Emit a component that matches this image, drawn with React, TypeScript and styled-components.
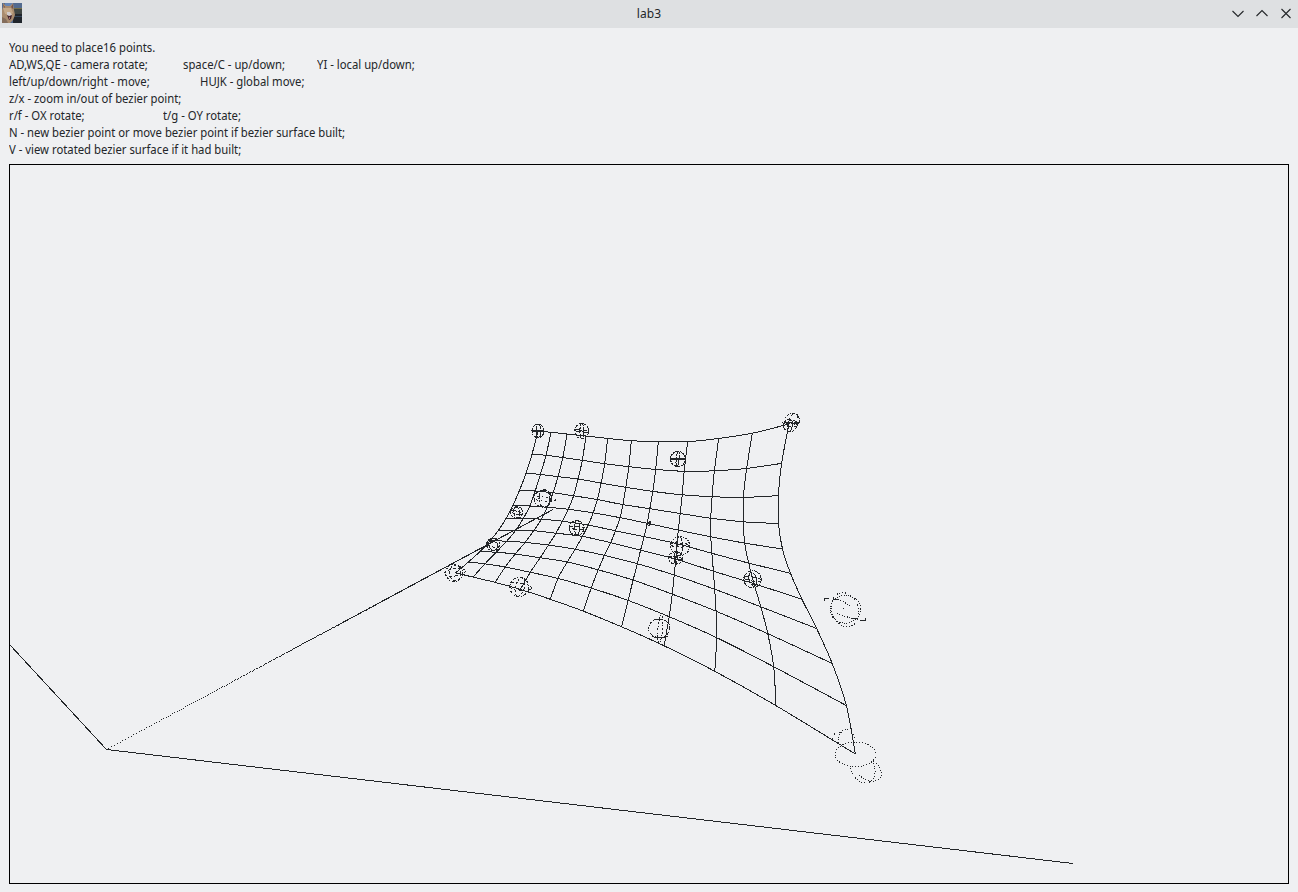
import React from "react";
import styled, { createGlobalStyle } from "styled-components";

const ink = "#232629";

const GlobalStyle = createGlobalStyle`
  html, body { margin: 0; padding: 0; background: #eff0f2; }
  body { font-family: "Noto Sans", sans-serif; color: ${ink}; overflow: hidden; }
`;

const Window = styled.div`
  display: flex;
  flex-direction: column;
  box-sizing: border-box;
  width: 1298px;
  height: 892px;
  background: #eff0f2;
`;

const TitleBar = styled.header`
  display: grid;
  grid-template-columns: 100px 1fr 100px;
  align-items: center;
  flex: none;
  height: 28px;
  background: #dee0e2;
`;

const AppIcon = styled.svg`
  display: block;
  width: 20px;
  height: 20px;
  margin: -2px 0 0 2px;
`;

const Title = styled.h1`
  margin: -1px 0 0;
  font-size: 12px;
  line-height: 17px;
  font-weight: 400;
  letter-spacing: 0.15px;
  text-align: center;
`;

const WindowButtons = styled.div`
  display: flex;
  justify-content: flex-end;
  gap: 8px;
  padding: 0 4px 2px 0;
`;

const Glyph = styled.svg`
  display: block;
  width: 16px;
  height: 16px;
  fill: none;
  stroke: ${ink};
  stroke-width: 1.1;
`;

const Help = styled.section`
  flex: none;
  padding: 11px 9px 6px;
`;

const HelpLine = styled.div`
  display: flex;
  height: 17px;
  font-size: 12px;
  line-height: 17px;
  white-space: pre;
`;

const Hint = styled.span<{ $w?: number }>`
  flex: none;
  display: block;
  width: ${(p) => (p.$w ? `${p.$w}px` : "auto")};
  transform: scaleX(0.942);
  transform-origin: left center;
`;

const Viewport = styled.main`
  flex: none;
  box-sizing: border-box;
  width: 1280px;
  height: 720px;
  margin-left: 9px;
  border: 1px solid #000;
`;

const Scene = styled.svg`
  display: block;
  width: 1278px;
  height: 718px;
  fill: none;
  stroke: ${ink};
  stroke-width: 1;
  shape-rendering: crispEdges;
`;

type Pt = [number, number];

// Surface samples, one row of eleven screen points per parameter step.
const surface: Pt[][] = [
  [[538,431.3],[551,432.3],[567,434],[586,436],[607.7,438.4],[631.3,440.7],[658.3,441.7],[687.6,441.7],[718.7,438.4],[752.3,433.2],[789,424]],
  [[532,454.3],[546,455.3],[562.8,457.6],[582.3,460.3],[604.7,463.7],[628.8,466.7],[655.7,469.4],[684.2,471.3],[714.4,470.8],[746.7,468.4],[781.6,463.4]],
  [[526,473.4],[540.4,474.4],[558,476.7],[578.1,479],[601.1,483.1],[625.8,487.3],[652.8,491.4],[682.2,494.8],[712.1,496.7],[743.4,497.4],[778.4,495.6]],
  [[519.5,490.4],[535.2,491],[553,492.8],[573.6,495.8],[597.3,499.6],[622.9,504.6],[649.8,508.7],[680.2,513.5],[710.8,518.2],[743.4,521.8],[778.5,523.5]],
  [[513,505.2],[529.8,506],[547.3,507.3],[568.2,509.3],[593.2,512.8],[620.1,517.7],[647.3,523.3],[678.3,530.1],[710.8,536.8],[744.7,543.1],[782.5,549]],
  [[506.2,518.2],[523.3,518.5],[541.4,519.2],[562.3,521.2],[588.2,525.1],[615.4,530.8],[644.1,536.6],[677.2,543.8],[711.9,553.3],[748.7,563.1],[790.5,573.3]],
  [[498.6,530.2],[515.8,530.3],[533.7,530.7],[556,533.2],[582.4,536.4],[610.7,542.7],[640.6,550.1],[675.8,559.2],[713.4,571.2],[754,583.7],[802,599.3]],
  [[490.2,540.6],[506.6,541.2],[525.1,542.4],[548.4,545.1],[575.2,549.2],[604.4,555.4],[637.3,563.7],[674.2,575.1],[714.7,589.2],[760.8,606.8],[816.6,628.5]],
  [[480.1,551.4],[496.2,552.3],[515.2,554],[540.1,557.8],[567.2,562],[598.2,569.8],[633.1,580.1],[672.2,594.1],[716.1,611.2],[767.8,633.7],[832.2,663.5]],
  [[468.2,562.2],[485,563.8],[505.2,567],[530.3,572.3],[558,578.4],[591.2,588.1],[628.1,600.4],[669.2,616.7],[716.7,637.7],[773.7,666.7],[846.4,705.6]],
  [[455.6,572.8],[473,577.1],[495.1,582.4],[520.3,589.4],[550.3,599.3],[583.4,611.2],[621.6,626.8],[664.1,645.8],[714.8,671.3],[775.9,705.6],[855.3,754]],
];

// Smooth curve through every sample (Catmull-Rom, written as cubic Béziers).
const toCurve = (pts: Pt[]) => {
  let d = `M${pts[0][0]} ${pts[0][1]}`;
  for (let i = 0; i < pts.length - 1; i++) {
    const a = pts[Math.max(i - 1, 0)];
    const b = pts[i];
    const c = pts[i + 1];
    const e = pts[Math.min(i + 2, pts.length - 1)];
    d += `C${b[0] + (c[0] - a[0]) / 6} ${b[1] + (c[1] - a[1]) / 6} `;
    d += `${c[0] - (e[0] - b[0]) / 6} ${c[1] - (e[1] - b[1]) / 6} ${c[0]} ${c[1]}`;
  }
  return d;
};

const meshPath =
  surface.map(toCurve).join("") +
  surface[0].map((_, c) => toCurve(surface.map((row) => row[c]))).join("");

// The depth axis is plotted point by point, denser as it recedes.
const depthAxis = () => {
  let d = "";
  let x = 108;
  while (x < 552) {
    const y = 749 - (x - 106) * 0.5375;
    d += `M${Math.round(x)} ${Math.round(y)}h1v1h-1z`;
    x += Math.max(0.5, 3 * Math.pow((566 - x) / 460, 2));
  }
  return d;
};

// cx, cy, rx, ry, rotation, dash
type Ring = [number, number, number, number, number, string];

const rings: Ring[] = [
  [538,431,6,6.7,0,"5 1 2 1"], [538.5,431,2.5,6.5,0,"6 1"], [537.5,431,6,0.6,3,"5 1"],
  [581.7,431,7,7.5,0,"4 1.5 2 1"], [581.8,431,1.9,7.5,0,"6 1"], [581.5,431,7.5,0.8,6,"7 1"],
  [678,459,7.5,7.5,0,"6 1 2 1"], [677.7,459,1.5,7.5,6,"8 1"], [678,459,7.5,0.4,0,"none"],
  [792.3,420.3,7,7,0,"3 1.5 1 1"], [790,425.5,6.7,6.3,0,"4 2 2 1"], [791,422.7,9,0.7,0,"4 1"], [793,420,3.5,7.5,25,"4 3"], [790,426,2.2,6,10,"5 1"],
  [543,498.7,8.7,8.7,0,"4 2 1 1"], [544.5,498.7,5.5,9,0,"2 1 5 2"], [544.5,499,11,2,4,"1.5 3"],
  [516.8,512.5,6,5.8,0,"4 1 2 1"], [516.8,512.5,3,5.6,-15,"4 1"], [516.8,512.7,6,1.6,12,"3 1"],
  [493.2,544.5,6.5,6.5,0,"4 1 2 1"], [493.2,544.5,4.5,6,-10,"5 1"], [493,544.5,7,2.5,12,"3 2"],
  [454.3,572.9,8.5,8.5,0,"3 1.5 1 1"], [455.3,573,5.5,8,0,"3 2"], [454.8,572.3,11,3.7,-8,"3 2"],
  [519.3,587,9.5,9.5,0,"3 1.5 1 2"], [520,587,4.5,9.5,15,"2 2"], [519.5,586.5,12.3,3.5,8,"4 3 1 2"],
  [576.7,527.8,7.4,7.4,0,"5 1 2 1"], [577,527.8,2.6,7.3,0,"6 1"], [576.7,527.8,7.3,1.6,4,"5 2"],
  [648.8,523.7,1.8,1.6,0,"2 1"], [649.2,523.7,0.8,2.2,30,"none"],
  [680.2,546,9.5,9.5,0,"2 1.5 1 1"], [679.5,546,3,9,0,"5 1"], [679.5,545,9.5,2,3,"3 2"],
  [675.7,558,7.2,6.2,0,"3 1"], [675.9,558,1.2,6.5,0,"none"], [675.7,558,7.3,1,8,"4 1"],
  [659.3,628.3,10.7,9.2,0,"2 2 1 1"], [660.3,628.7,2.4,14,5,"1 2 2 1"],
  [752.5,579.2,8.7,8.5,0,"4 1 1 1"], [752.7,579.2,3.6,7,-12,"5 2"], [752.5,579,9.5,2,10,"4 3"],
  [845.3,609.2,15.3,13.9,0,"1 1.3"], [845,609.7,13.3,17.5,-20,"1 1.8"],
  [855.5,754.5,20.3,12.3,0,"1 1.8"],
];

// Bold visible arcs and isolated samples of the nearest control spheres.
const arcs = [
  "M652 636.500Q659 639 668 636.500M654 619.500h8",
  "M752 584h6M756 577v8M748 575v5",
  "M824.500 601v-2.500h4M833 599h5M851 618.500h7M860 620h5v-2.500",
].join("");

const dotted = [
  "M838 599L852 606.500M837 613.500L852 618.500M843 608.500h1",
  "M832.500 739Q832 733 840 732.500M838.500 743C837 729 850 724 854.500 738",
  "M850 768.500C854 780 864 787 873 780C876.500 773 875 768 873 761",
  "M876.500 763C882 771 884 778 876 780.500C869 783 861 779 857 771",
].join("");

const App = () => (
  <>
    <GlobalStyle />
    <Window>
      <TitleBar>
        <AppIcon viewBox="0 0 20 20" aria-label="lab3">
          <path fill="#536b8f" d="M0 0h20v20H0z" />
          <path fill="#6685b5" d="M3 0h8v4H3z" />
          <path fill="#3f4643" d="M11 5h9v6h-9z" />
          <path fill="#777047" d="M12 5h8v1h-8z" />
          <path fill="#20252b" d="M11 11h9v9h-9z" />
          <path fill="#34465b" d="M12 13h8v1h-8z" />
          <path fill="#a88b6e" d="M0 7l1-3 0-4 3 3h4l3-3 1 7 1 5-2 5-3 3H0z" />
          <path fill="#765348" d="M1 1l2 3-1 1zM9 4l2-3 0 5z" />
          <path fill="#c4a888" d="M1 5h8l2 5-3 2-5-1z" />
          <path fill="#d2cccb" d="M5 9h3l2 3-2 2-3-2z" />
          <path fill="#43242b" d="M5 12l2 1 3-1-1 4-2 1z" />
          <path fill="#a36d70" d="M7 14h1v2H7z" />
          <path fill="#846d5b" d="M0 14l4 2 2 4H0z" />
        </AppIcon>
        <Title>lab3</Title>
        <WindowButtons>
          <Glyph viewBox="0 0 16 16"><path d="M2.5 6l5.500 5.500L13.500 6" /></Glyph>
          <Glyph viewBox="0 0 16 16"><path d="M2.5 11L8 5.500l5.500 5.500" /></Glyph>
          <Glyph viewBox="0 0 16 16"><path d="M3.500 4l9 9M12.500 4l-9 9" /></Glyph>
        </WindowButtons>
      </TitleBar>
      <Help>
        <HelpLine><Hint>You need to place16 points.</Hint></HelpLine>
        <HelpLine>
          <Hint $w={174}>AD,WS,QE - camera rotate;</Hint>
          <Hint $w={134}>space/C - up/down;</Hint>
          <Hint>YI - local up/down;</Hint>
        </HelpLine>
        <HelpLine>
          <Hint $w={190.5}>left/up/down/right - move;</Hint>
          <Hint>HUJK - global move;</Hint>
        </HelpLine>
        <HelpLine><Hint>z/x - zoom in/out of bezier point;</Hint></HelpLine>
        <HelpLine>
          <Hint $w={154.3}>r/f - OX rotate;</Hint>
          <Hint>t/g - OY rotate;</Hint>
        </HelpLine>
        <HelpLine><Hint>N - new bezier point or move bezier point if bezier surface built;</Hint></HelpLine>
        <HelpLine><Hint>V - view rotated bezier surface if it had built;</Hint></HelpLine>
      </Help>
      <Viewport>
        <Scene viewBox="10 165 1278 718">
          <path d={depthAxis()} fill={ink} stroke="none" />
          <path d="M9.500 644.500L106.500 749.500L1073 863.500" />
          <path d={meshPath} />
          {rings.map(([cx, cy, rx, ry, rot, dash], i) => (
            <ellipse
              key={i}
              cx={cx}
              cy={cy}
              rx={rx}
              ry={ry}
              strokeDasharray={dash}
              transform={`rotate(${rot} ${cx} ${cy})`}
            />
          ))}
          <path d={arcs} />
          <path strokeDasharray="1 1.6" d={dotted} />
        </Scene>
      </Viewport>
    </Window>
  </>
);

export default App;
